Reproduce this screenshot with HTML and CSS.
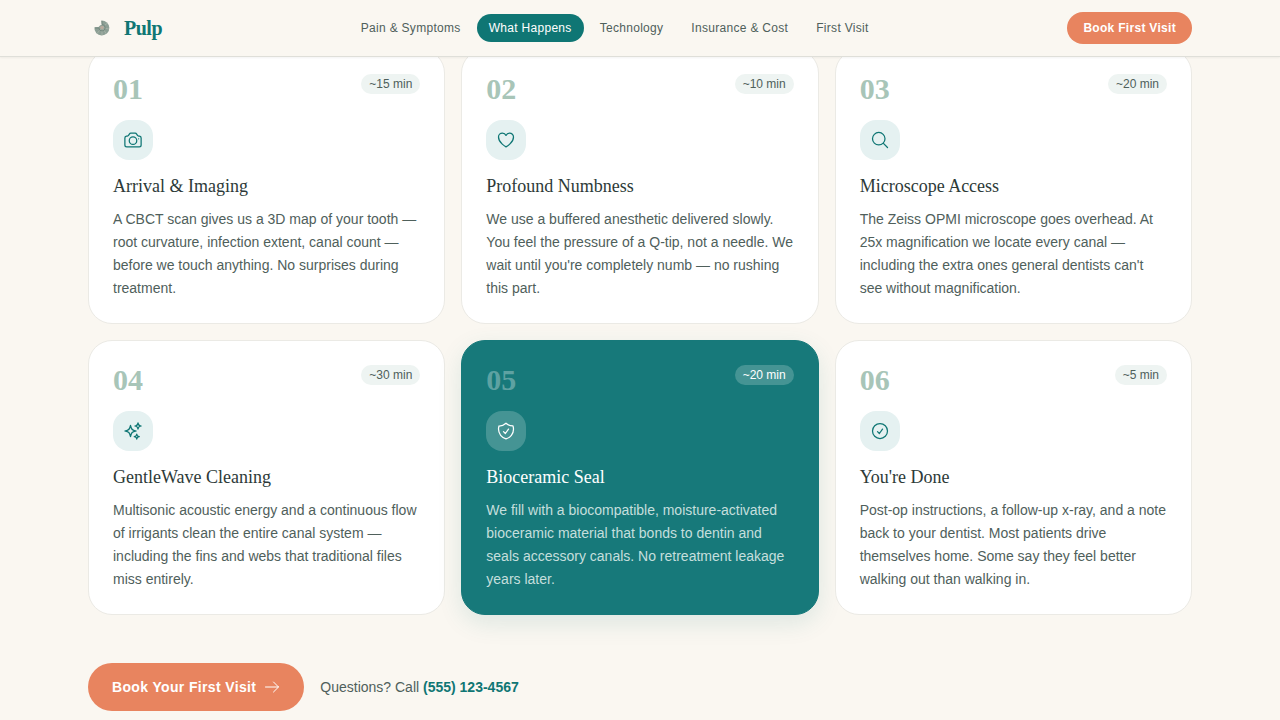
FILE: index.html
```html
<!DOCTYPE html>
<html lang="en">
<head>
    <meta charset="UTF-8">
    <meta name="viewport" content="width=device-width, initial-scale=1.0">
    <title>Pulp</title>
    <link rel="stylesheet" href="styles.css">
</head>
<body>
    <header class="header">
        <div class="container header-inner">
            <a href="#" class="logo">
                <svg class="logo-mark" viewBox="0 0 28 28" fill="none">
                    <path d="M13.2 6.5A7.5 7.5 0 1 1 6.4 13.2L10.5 13 12 11.5 14 10.5Z" fill="#8c9f95"/>
                    <path d="M14 13.5L19.5 9M14 13.5l7 1.5M14 13.5l4.5 6.5M14 13.5V21M14 13.5l-5 6" stroke="#a9b5aa" stroke-width="0.8"/>
                    <path d="M14 7v3.500a3.200 3.200 0 1 1-3.200 3.500H7" stroke="#73887e" stroke-width="1"/>
                    <circle cx="14" cy="13.5" r="1.800" fill="#b9aa9d"/>
                </svg>
                <span>Pulp</span>
            </a>
            <nav class="nav">
                <a href="#pain">Pain &amp; Symptoms</a>
                <a href="#steps" class="active">What Happens</a>
                <a href="#technology">Technology</a>
                <a href="#insurance">Insurance &amp; Cost</a>
                <a href="#visit">First Visit</a>
            </nav>
            <button class="btn btn-small">Book First Visit</button>
        </div>
    </header>

    <main class="container">
        <section class="steps" id="steps">
            <article class="card">
                <div class="card-top">
                    <span class="number">01</span>
                    <span class="time">~15 min</span>
                </div>
                <div class="icon">
                    <svg viewBox="0 0 24 24">
                        <path d="M6.827 6.175A2.31 2.31 0 0 1 5.186 7.23c-.38.054-.757.112-1.134.175C2.999 7.58 2.25 8.507 2.25 9.574V18a2.25 2.25 0 0 0 2.25 2.25h15A2.25 2.25 0 0 0 21.75 18V9.574c0-1.067-.75-1.994-1.802-2.169a47.865 47.865 0 0 0-1.134-.175 2.31 2.31 0 0 1-1.64-1.055l-.822-1.316a2.192 2.192 0 0 0-1.736-1.039 48.774 48.774 0 0 0-5.232 0 2.192 2.192 0 0 0-1.736 1.039l-.821 1.316Z"/>
                        <path d="M16.5 12.75a4.5 4.5 0 1 1-9 0 4.5 4.5 0 0 1 9 0ZM18.75 10.5h.008v.008h-.008V10.5Z"/>
                    </svg>
                </div>
                <h3>Arrival &amp; Imaging</h3>
                <p>A CBCT scan gives us a 3D map of your tooth — root curvature, infection extent, canal count — before we touch anything. No surprises during treatment.</p>
            </article>

            <article class="card">
                <div class="card-top">
                    <span class="number">02</span>
                    <span class="time">~10 min</span>
                </div>
                <div class="icon">
                    <svg viewBox="0 0 24 24">
                        <path d="M21 8.25c0-2.485-2.099-4.5-4.688-4.5-1.935 0-3.597 1.126-4.312 2.733-.715-1.607-2.377-2.733-4.313-2.733C5.1 3.75 3 5.765 3 8.25c0 7.22 9 12 9 12s9-4.78 9-12Z"/>
                    </svg>
                </div>
                <h3>Profound Numbness</h3>
                <p>We use a buffered anesthetic delivered slowly. You feel the pressure of a Q-tip, not a needle. We wait until you're completely numb — no rushing this part.</p>
            </article>

            <article class="card">
                <div class="card-top">
                    <span class="number">03</span>
                    <span class="time">~20 min</span>
                </div>
                <div class="icon">
                    <svg viewBox="0 0 24 24">
                        <path d="m21 21-5.197-5.197m0 0A7.5 7.5 0 1 0 5.196 5.196a7.5 7.5 0 0 0 10.607 10.607Z"/>
                    </svg>
                </div>
                <h3>Microscope Access</h3>
                <p>The Zeiss OPMI microscope goes overhead. At 25x magnification we locate every canal — including the extra ones general dentists can't see without magnification.</p>
            </article>

            <article class="card">
                <div class="card-top">
                    <span class="number">04</span>
                    <span class="time">~30 min</span>
                </div>
                <div class="icon">
                    <svg viewBox="0 0 24 24">
                        <path d="M9.813 15.904 9 18.75l-.813-2.846a4.5 4.5 0 0 0-3.09-3.09L2.25 12l2.846-.813a4.5 4.5 0 0 0 3.09-3.09L9 5.25l.813 2.846a4.5 4.5 0 0 0 3.09 3.09L15.75 12l-2.846.813a4.5 4.5 0 0 0-3.09 3.09Z"/>
                        <path d="M18.259 8.715 18 9.75l-.259-1.035a3.375 3.375 0 0 0-2.455-2.456L14.25 6l1.036-.259a3.375 3.375 0 0 0 2.455-2.456L18 2.25l.259 1.035a3.375 3.375 0 0 0 2.456 2.456L21.75 6l-1.035.259a3.375 3.375 0 0 0-2.456 2.456Z"/>
                        <path d="M16.894 20.567 16.5 21.75l-.394-1.183a2.25 2.25 0 0 0-1.423-1.423L13.5 18.75l1.183-.394a2.25 2.25 0 0 0 1.423-1.423l.394-1.183.394 1.183a2.25 2.25 0 0 0 1.423 1.423l1.183.394-1.183.394a2.25 2.25 0 0 0-1.423 1.423Z"/>
                    </svg>
                </div>
                <h3>GentleWave Cleaning</h3>
                <p>Multisonic acoustic energy and a continuous flow of irrigants clean the entire canal system — including the fins and webs that traditional files miss entirely.</p>
            </article>

            <article class="card featured">
                <div class="card-top">
                    <span class="number">05</span>
                    <span class="time">~20 min</span>
                </div>
                <div class="icon">
                    <svg viewBox="0 0 24 24">
                        <path d="M9 12.75 11.25 15 15 9.75m-3-7.036A11.959 11.959 0 0 1 3.598 6 11.99 11.99 0 0 0 3 9.749c0 5.592 3.824 10.29 9 11.623 5.176-1.332 9-6.03 9-11.622 0-1.31-.21-2.571-.598-3.751h-.152c-3.196 0-6.1-1.248-8.25-3.285Z"/>
                    </svg>
                </div>
                <h3>Bioceramic Seal</h3>
                <p>We fill with a biocompatible, moisture-activated bioceramic material that bonds to dentin and seals accessory canals. No retreatment leakage years later.</p>
            </article>

            <article class="card">
                <div class="card-top">
                    <span class="number">06</span>
                    <span class="time">~5 min</span>
                </div>
                <div class="icon">
                    <svg viewBox="0 0 24 24">
                        <path d="M9 12.75 11.25 15 15 9.75M21 12a9 9 0 1 1-18 0 9 9 0 0 1 18 0Z"/>
                    </svg>
                </div>
                <h3>You're Done</h3>
                <p>Post-op instructions, a follow-up x-ray, and a note back to your dentist. Most patients drive themselves home. Some say they feel better walking out than walking in.</p>
            </article>
        </section>

        <div class="cta">
            <button class="btn btn-large">
                Book Your First Visit
                <svg viewBox="0 0 16 16">
                    <path d="M1.5 8h13M9.5 3l5 5-5 5"/>
                </svg>
            </button>
            <p>Questions? Call <a href="tel:5551234567">(555) 123-4567</a></p>
        </div>
    </main>
</body>
</html>
```
FILE: styles.css
```css
* {
    margin: 0;
    padding: 0;
    box-sizing: border-box;
}

body {
    background: #faf7f1;
    color: #4f605b;
    font-family: "Liberation Sans", Arial, sans-serif;
    font-size: 14px;
}

a {
    color: inherit;
    text-decoration: none;
}

.container {
    max-width: 1152px;
    margin: 0 auto;
    padding: 0 24px;
}

/* Header */
.header {
    position: sticky;
    top: 0;
    z-index: 10;
    background: #faf7f1;
    border-bottom: 1px solid #dfdfd9;
    box-shadow: 0 1px 2px rgba(0, 0, 0, 0.05);
}

.header-inner {
    display: flex;
    align-items: center;
    justify-content: space-between;
    min-height: 56px;
}

.logo {
    display: flex;
    align-items: center;
    gap: 8px;
    color: #0f7674;
    font-family: "Liberation Serif", "Times New Roman", serif;
    font-size: 20px;
    font-weight: 700;
    letter-spacing: -0.025em;
}

.logo-mark {
    width: 28px;
    height: 28px;
}

.nav {
    display: flex;
    gap: 4px;
}

.nav a {
    padding: 6px 12px;
    border-radius: 999px;
    font-size: 12px;
    line-height: 16px;
    letter-spacing: 0.025em;
}

.nav a.active {
    background: #0f7674;
    color: #ffffff;
}

.btn {
    display: inline-flex;
    align-items: center;
    gap: 8px;
    border: none;
    border-radius: 999px;
    background: #e8845f;
    color: #ffffff;
    font-family: inherit;
    font-weight: 700;
    letter-spacing: 0.025em;
    cursor: pointer;
}

.btn-small {
    padding: 8px 16px;
    font-size: 12px;
    line-height: 16px;
}

.btn-large {
    padding: 14px 24px;
    font-size: 14px;
    line-height: 20px;
}

.btn svg {
    width: 16px;
    height: 16px;
    fill: none;
    stroke: currentColor;
    stroke-width: 1;
    stroke-linecap: round;
    stroke-linejoin: round;
}

/* Steps, the first row starts just under the header */
.steps {
    display: grid;
    grid-template-columns: repeat(3, 1fr);
    gap: 16px;
    margin-top: -8px;
}

.card {
    padding: 24px 24px 23px;
    background: #ffffff;
    border: 1px solid #ebeae5;
    border-radius: 24px;
}

.card-top {
    display: flex;
    align-items: flex-start;
    justify-content: space-between;
    margin-bottom: 16px;
}

.number {
    color: #a8c5b8;
    font-family: "Liberation Serif", "Times New Roman", serif;
    font-size: 30px;
    font-weight: 700;
    line-height: 30px;
}

.time {
    padding: 2px 8px;
    border-radius: 999px;
    background: #eef4f2;
    font-size: 12px;
    line-height: 16px;
}

.icon {
    display: flex;
    align-items: center;
    justify-content: center;
    width: 40px;
    height: 40px;
    margin-bottom: 16px;
    border-radius: 16px;
    background: #e5f1f1;
    color: #0f7674;
}

.icon svg {
    width: 20px;
    height: 20px;
    fill: none;
    stroke: currentColor;
    stroke-width: 1.5;
    stroke-linecap: round;
    stroke-linejoin: round;
}

.card h3 {
    margin-bottom: 11px;
    color: #2d3a38;
    font-family: "Liberation Serif", "Times New Roman", serif;
    font-size: 18px;
    font-weight: 400;
    line-height: 21px;
}

.card p {
    line-height: 23px;
}

.card.featured {
    background: #17797a;
    border-color: #17797a;
    box-shadow: 0 8px 24px rgba(15, 118, 116, 0.12);
}

.featured .number {
    color: #5ea2a2;
}

.featured .time {
    background: #459494;
    color: #ffffff;
}

.featured .icon {
    background: #459494;
    color: #ffffff;
}

.featured h3 {
    color: #ffffff;
}

.featured p {
    color: #c5dfdd;
}

/* Call to action */
.cta {
    display: flex;
    align-items: center;
    gap: 16px;
    margin-top: 48px;
}

.cta p {
    line-height: 20px;
}

.cta a {
    color: #0f7674;
    font-weight: 700;
}
```
